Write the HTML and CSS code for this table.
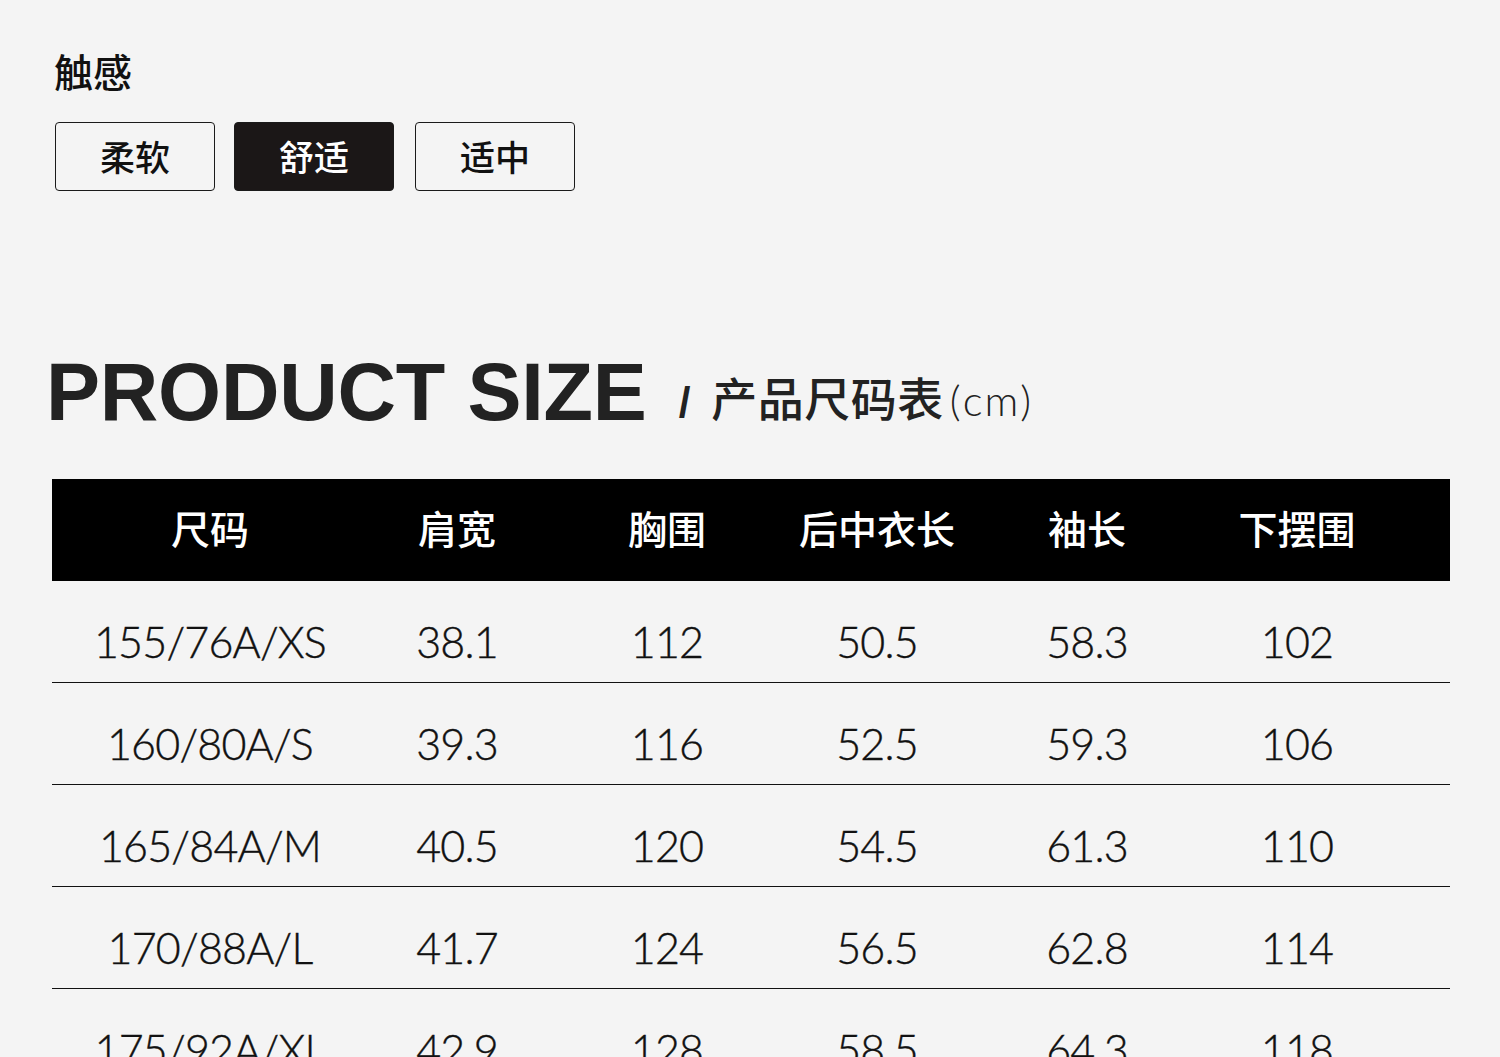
FILE: index.html
```html
<!DOCTYPE html>
<html lang="zh-CN">
<head>
<meta charset="utf-8">
<title>Product Size</title>
<link rel="stylesheet" href="styles.css">
</head>
<body>
<div class="page">
  <section class="feel">
    <h2 class="feel-title">触感</h2>
    <div class="options">
      <div class="opt">柔软</div>
      <div class="opt opt-active">舒适</div>
      <div class="opt">适中</div>
    </div>
  </section>

  <section class="size">
    <h1 class="size-title"><span class="en">PRODUCT SIZE</span><span class="slash">/</span><span class="zh">产品尺码表</span><span class="unit">(cm)</span></h1>

    <div class="table">
      <div class="row head">
        <div class="cell">尺码</div>
        <div class="cell">肩宽</div>
        <div class="cell">胸围</div>
        <div class="cell">后中衣长</div>
        <div class="cell">袖长</div>
        <div class="cell">下摆围</div>
      </div>
      <div class="row">
        <div class="cell">155/76A/XS</div><div class="cell">38.1</div><div class="cell">112</div><div class="cell">50.5</div><div class="cell">58.3</div><div class="cell">102</div>
      </div>
      <div class="row">
        <div class="cell">160/80A/S</div><div class="cell">39.3</div><div class="cell">116</div><div class="cell">52.5</div><div class="cell">59.3</div><div class="cell">106</div>
      </div>
      <div class="row">
        <div class="cell">165/84A/M</div><div class="cell">40.5</div><div class="cell">120</div><div class="cell">54.5</div><div class="cell">61.3</div><div class="cell">110</div>
      </div>
      <div class="row">
        <div class="cell">170/88A/L</div><div class="cell">41.7</div><div class="cell">124</div><div class="cell">56.5</div><div class="cell">62.8</div><div class="cell">114</div>
      </div>
      <div class="row">
        <div class="cell">175/92A/XL</div><div class="cell">42.9</div><div class="cell">128</div><div class="cell">58.5</div><div class="cell">64.3</div><div class="cell">118</div>
      </div>
    </div>
  </section>
</div>
</body>
</html>
```

FILE: styles.css
```css
html, body {
  margin: 0;
  padding: 0;
  background: #f4f4f4;
  overflow: hidden;
}
body {
  font-family: "Noto Sans CJK SC", "Noto Sans", sans-serif;
  color: #1a1a1a;
}
.page {
  width: 1500px;
  height: 1057px;
  overflow: hidden;
}
.feel {
  padding: 45px 0 0 54px;
}
.feel-title {
  margin: 0;
  font-size: 39px;
  font-weight: 500;
  line-height: 50px;
  color: #111;
}
.options {
  display: flex;
  gap: 19px;
  margin-top: 27px;
  padding-left: 1px;
}
.opt {
  box-sizing: border-box;
  width: 160px;
  height: 69px;
  border: 1px solid #1a1a1a;
  border-radius: 4px;
  display: flex;
  align-items: center;
  justify-content: center;
  font-size: 35px;
  font-weight: 500;
  color: #111;
  padding-bottom: 2px;
}
.opt + .opt-active + .opt { margin-left: 2px; }
.opt-active {
  background: #1b1717;
  color: #fff;
}
.size {
  margin-top: 160px;
}
.size-title {
  margin: 0 0 0 46px;
  height: 82px;
  line-height: 82px;
  color: #222;
  font-weight: normal;
  white-space: nowrap;
}
.en {
  font-family: "Liberation Sans", Arial, sans-serif;
  font-weight: 700;
  font-size: 81px;
  letter-spacing: -0.2px;
}
.slash {
  font-family: "Liberation Sans", Arial, sans-serif;
  font-weight: 700;
  font-size: 42px;
  margin-left: 32px;
  margin-right: 21px;
  vertical-align: 3px;
}
.zh {
  font-size: 46px;
  font-weight: 500;
  vertical-align: 4px;
  letter-spacing: 0.5px;
}
.unit {
  font-family: "Lato", sans-serif;
  font-weight: 300;
  font-size: 42px;
  margin-left: 6px;
  vertical-align: 4px;
  letter-spacing: 2px;
}
.table {
  margin: 46px 50px 0 52px;
}
.row {
  display: grid;
  grid-template-columns: 284px repeat(5, 210px);
  padding-left: 16px;
  height: 101px;
  border-bottom: 1px solid #111;
  font-family: "Lato", sans-serif;
  font-weight: 300;
  font-size: 43px;
  color: #111;
  align-items: center;
}
.row .cell {
  text-align: center;
  padding-top: 20px;
  letter-spacing: -0.8px;
  -webkit-text-stroke: 0.4px #111;
}
.row.head {
  height: 102px;
  background: #000;
  border-bottom: none;
  font-family: "Noto Sans CJK SC", sans-serif;
  font-size: 39px;
  font-weight: 500;
  color: #fff;
}
.row.head .cell {
  padding-top: 0;
  padding-bottom: 6px;
  letter-spacing: 0;
  -webkit-text-stroke: 0;
}
```
